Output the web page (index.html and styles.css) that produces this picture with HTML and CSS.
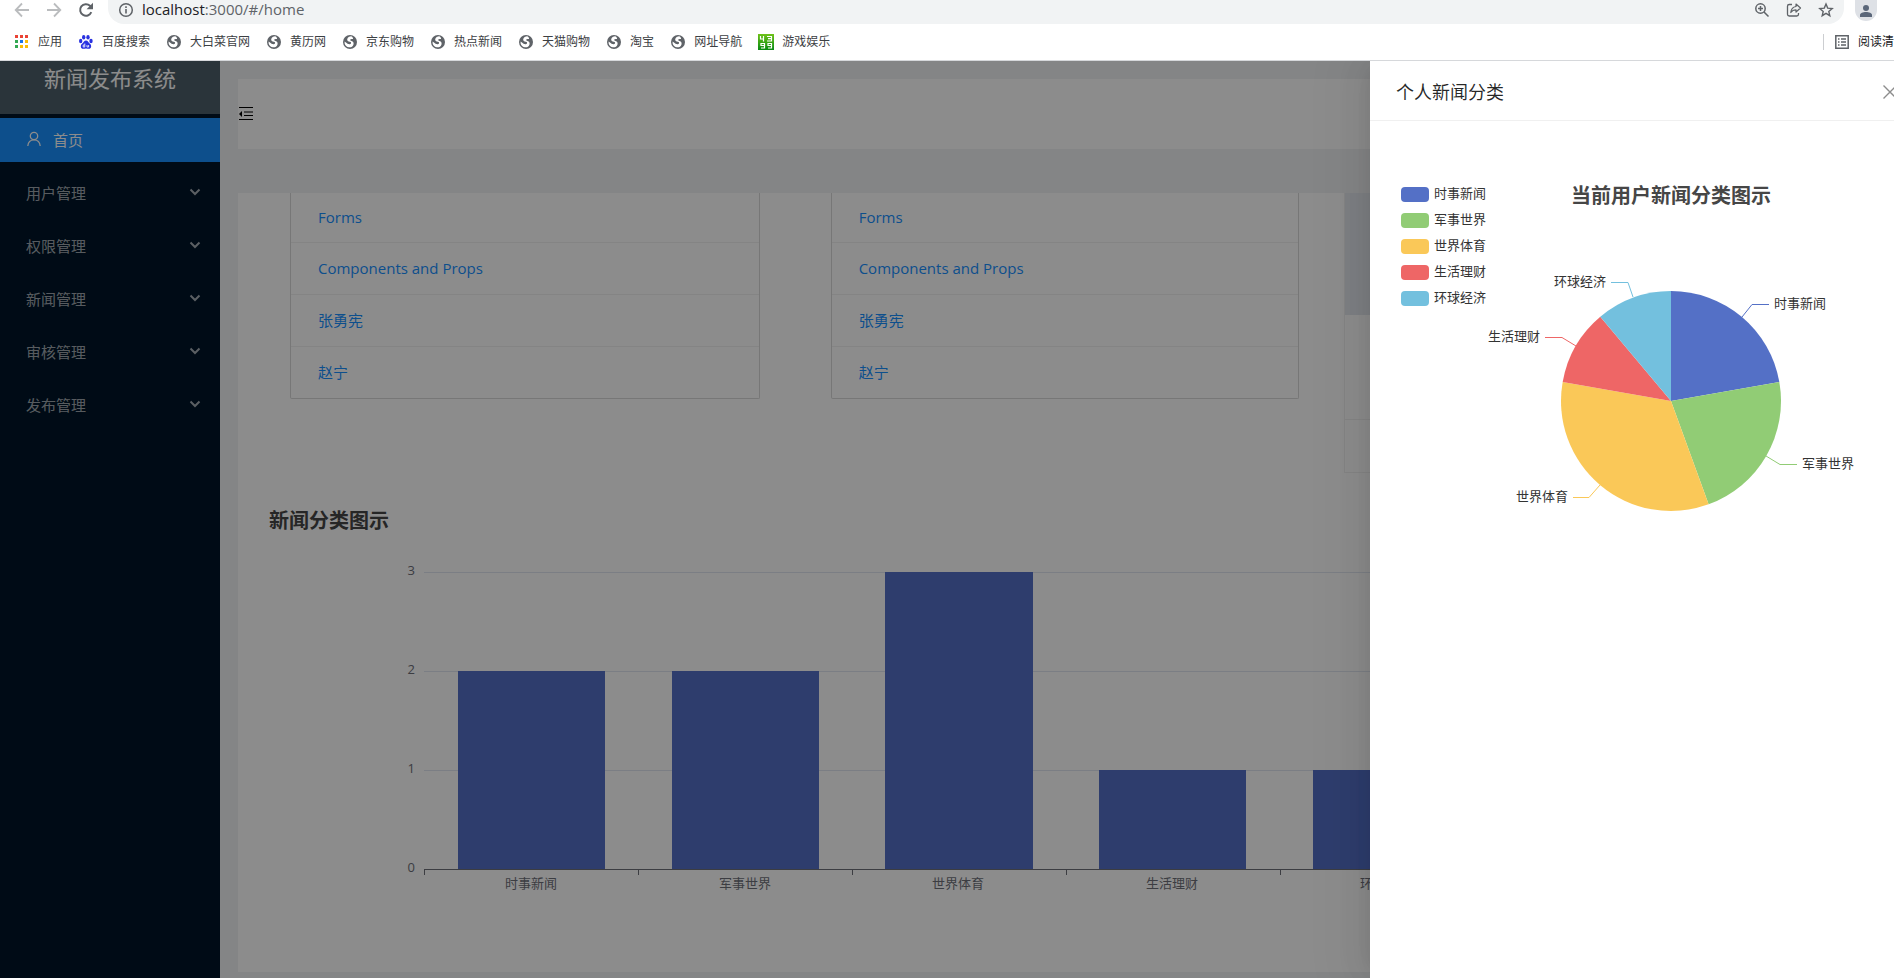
FILE: index.html
```html
<!DOCTYPE html>
<html lang="zh-CN">
<head>
<meta charset="utf-8">
<title>新闻发布系统</title>
<link rel="stylesheet" href="styles.css">
</head>
<body>
<svg class="sprite" aria-hidden="true">
  <symbol id="globe" viewBox="0 0 16 16">
    <circle cx="8" cy="8" r="7" fill="#5f6368"/>
    <path d="M9.200 2.300C7.500 2.500 5.500 3.300 5.200 5.300c-.2 1.500 1 2.200 2.600 2.400 1.300.2 1.400.7 1.200 1.500-.3 1.100-1.500 1.200-3 .9L2.600 7.500c-.4 2.300.8 4.400 2.900 5.400l.4.200c2.600.6 5-.3 5.600-2.700.4-1.600-.2-3-2-3.500-1.200-.3-1.500-.7-1.200-1.400.3-.6 1.200-.8 2.700-.4.300-1-.5-2.400-1.800-2.800z" fill="#fff"/>
  </symbol>
  <symbol id="chevron" viewBox="0 0 12 8">
    <path d="M1.500 1.500 6 6l4.500-4.500" fill="none" stroke="currentColor" stroke-width="2"/>
  </symbol>
</svg>

<header class="toolbar">
  <div class="nav-buttons">
    <button class="icon-button faded" aria-label="后退"><svg width="16" height="16" viewBox="0 0 16 16"><path d="M15 8H2M8 1.500 1.700 8 8 14.500" fill="none" stroke="currentColor" stroke-width="1.800"/></svg></button>
    <button class="icon-button faded" aria-label="前进"><svg width="16" height="16" viewBox="0 0 16 16"><path d="M1 8h13M8 1.500 14.300 8 8 14.500" fill="none" stroke="currentColor" stroke-width="1.800"/></svg></button>
    <button class="icon-button" aria-label="重新加载"><svg width="16" height="16" viewBox="0 0 16 16"><path d="M13.300 10.200A5.800 5.800 0 1 1 12 3.800L13.500 5.300" fill="none" stroke="currentColor" stroke-width="2"/><path d="M15 .8v6.400H8.600z" fill="currentColor"/></svg></button>
  </div>
  <div class="address">
    <svg width="16" height="16" viewBox="0 0 16 16"><circle cx="8" cy="8" r="6.300" fill="none" stroke="#5f6368" stroke-width="1.500"/><path d="M8 7v4.500M8 4.300v1.600" stroke="#5f6368" stroke-width="1.600"/></svg>
    <span class="url">localhost<span class="url-path">:3000/#/home</span></span>
    <span class="address-actions">
      <button class="icon-button" aria-label="缩放"><svg width="16" height="16" viewBox="0 0 16 16"><circle cx="6.500" cy="6.500" r="4.700" fill="none" stroke="currentColor" stroke-width="1.500"/><path d="M10 10l4.500 4.500M6.500 4v5M4 6.500h5" fill="none" stroke="currentColor" stroke-width="1.500"/></svg></button>
      <button class="icon-button" aria-label="分享"><svg width="16" height="16" viewBox="0 0 16 16"><path d="M6 2.500H3.200A1.700 1.700 0 0 0 1.500 4.200v8.100A1.700 1.700 0 0 0 3.200 14h7.600a1.700 1.700 0 0 0 1.700-1.700V11" fill="none" stroke="currentColor" stroke-width="1.300"/><path d="M10 2l4.500 4-4.500 4V7.800c-2.500 0-4 .8-5.200 2.700.3-3 1.900-5.500 5.200-6z" fill="none" stroke="currentColor" stroke-width="1.200" stroke-linejoin="round"/></svg></button>
      <button class="icon-button" aria-label="收藏"><svg width="16" height="16" viewBox="0 0 16 16"><path d="M8 2l1.700 4.100 4.500.4-3.400 2.900 1 4.300L8 11.400l-3.800 2.300 1-4.300L1.800 6.500l4.500-.4z" fill="none" stroke="currentColor" stroke-width="1.400"/></svg></button>
    </span>
  </div>
  <button class="avatar" aria-label="用户"><svg width="14" height="14" viewBox="0 0 14 14"><circle cx="7" cy="4" r="3" fill="#5a6679"/><path d="M1 13v-2c0-2 3-3 6-3s6 1 6 3v2z" fill="#5a6679"/></svg></button>
</header>

<nav class="bookmarks">
  <a href="#apps"><svg width="16" height="16" viewBox="0 0 16 16"><path d="M1 1h3v3H1zM6 1h3v3H6zM11 1h3v3h-3z" fill="#ea4335"/><path d="M1 6h3v3H1zM1 11h3v3H1z" fill="#34a853"/><path d="M6 6h3v3H6z" fill="#1a73e8"/><path d="M6 11h3v3H6zM11 6h3v3h-3zM11 11h3v3h-3z" fill="#fbbc05"/></svg>应用</a>
  <a href="#baidu"><svg width="16" height="16" viewBox="0 0 16 16"><g fill="#2932e1"><ellipse cx="2.700" cy="7" rx="1.700" ry="2.200"/><ellipse cx="5.700" cy="3.200" rx="1.700" ry="2.300"/><ellipse cx="10" cy="3.200" rx="1.700" ry="2.300"/><ellipse cx="13" cy="7" rx="1.700" ry="2.200"/><path d="M8 6.500c2 0 2.500 2.200 4.200 3.500 1.600 1.400 1.300 4.800-1.400 4.800-1 0-1.700-.3-2.800-.3s-1.800.3-2.800.3c-2.700 0-3-3.400-1.400-4.800C5.500 8.700 6 6.500 8 6.500z"/></g><path d="M6.800 9.500v3.500H5.200v-2h1.600M9 11v2h1.600v-2" fill="none" stroke="#fff" stroke-width=".8"/></svg>百度搜索</a>
  <a href="#b1"><svg width="16" height="16"><use href="#globe"/></svg>大白菜官网</a>
  <a href="#b2"><svg width="16" height="16"><use href="#globe"/></svg>黄历网</a>
  <a href="#b3"><svg width="16" height="16"><use href="#globe"/></svg>京东购物</a>
  <a href="#b4"><svg width="16" height="16"><use href="#globe"/></svg>热点新闻</a>
  <a href="#b5"><svg width="16" height="16"><use href="#globe"/></svg>天猫购物</a>
  <a href="#b6"><svg width="16" height="16"><use href="#globe"/></svg>淘宝</a>
  <a href="#b7"><svg width="16" height="16"><use href="#globe"/></svg>网址导航</a>
  <a href="#b8"><svg width="16" height="16" viewBox="0 0 16 16"><defs><linearGradient id="green" x1="0" y1="0" x2="0" y2="1"><stop offset="0" stop-color="#6fc219"/><stop offset="1" stop-color="#078a12"/></linearGradient></defs><path d="M0 0h16v16H0z" fill="url(#green)"/><path d="M2.500 2v3h3.500M5.500 2v5.500M9 2.500h4.500v4.500H9M10 4.700h3.500M6.500 11.500H3V9.500h3.500v4.500H3M13.500 11.500H10V9.500h3.500v4.500H10" fill="none" stroke="#fff" stroke-width="1.200"/></svg>游戏娱乐</a>
  <a class="reading-list" href="#reading"><svg width="16" height="16" viewBox="0 0 16 16"><path d="M1.800 1.800h12.400v12.400H1.800z" fill="none" stroke="#5f6368" stroke-width="1.500"/><path d="M4 5h1.500M4 8h1.500M4 11h1.500M7 5h5M7 8h5M7 11h5" stroke="#5f6368" stroke-width="1.500"/></svg>阅读清单</a>
</nav>

<div class="app">
  <aside class="sidebar">
    <h1 class="logo">新闻发布系统</h1>
    <nav class="menu">
      <a class="menu-item active" href="#/home"><svg width="16" height="16" viewBox="0 0 16 16"><circle cx="8" cy="5" r="3.700" fill="none" stroke="currentColor" stroke-width="1.300"/><path d="M1.800 15c.2-3.700 2.700-6.200 6.200-6.200s6 2.500 6.200 6.200" fill="none" stroke="currentColor" stroke-width="1.300"/></svg>首页</a>
      <button class="menu-item">用户管理<svg class="arrow" width="12" height="8"><use href="#chevron"/></svg></button>
      <button class="menu-item">权限管理<svg class="arrow" width="12" height="8"><use href="#chevron"/></svg></button>
      <button class="menu-item">新闻管理<svg class="arrow" width="12" height="8"><use href="#chevron"/></svg></button>
      <button class="menu-item">审核管理<svg class="arrow" width="12" height="8"><use href="#chevron"/></svg></button>
      <button class="menu-item">发布管理<svg class="arrow" width="12" height="8"><use href="#chevron"/></svg></button>
    </nav>
  </aside>

  <div class="layout">
    <header class="page-header">
      <button class="icon-button fold" aria-label="折叠菜单"><svg width="16" height="16" viewBox="0 0 16 16"><path d="M1 1.500h14M6 6h9M6 9.500h9M1 13.500h14" stroke="currentColor"/><path d="M4 5v6L1 8z" fill="currentColor"/></svg></button>
    </header>
    <main class="content">
      <section class="cards">
        <ul class="list-card first">
          <li><a href="#n1">Forms</a></li>
          <li><a href="#n2">Components and Props</a></li>
          <li><a href="#n3">张勇宪</a></li>
          <li><a href="#n4">赵宁</a></li>
        </ul>
        <ul class="list-card">
          <li><a href="#n1">Forms</a></li>
          <li><a href="#n2">Components and Props</a></li>
          <li><a href="#n3">张勇宪</a></li>
          <li><a href="#n4">赵宁</a></li>
        </ul>
        <article class="profile-card">
          <div class="cover"></div>
          <div class="profile-body"></div>
          <div class="profile-actions"></div>
        </article>
      </section>
      <section class="bar-section">
        <h2 class="chart-title">新闻分类图示</h2>
        <svg class="bar-chart" width="1300" height="370">
          <path class="grid-line" d="M186 37.500H1256M186 136.500H1256M186 235.500H1256"/>
          <g class="bar">
            <rect x="220" y="136" width="147" height="198"/>
            <rect x="434" y="136" width="147" height="198"/>
            <rect x="647" y="37" width="148" height="297"/>
            <rect x="861" y="235" width="147" height="99"/>
            <rect x="1075" y="235" width="147" height="99"/>
          </g>
          <path class="axis" d="M186 334.500H1256M186.500 334v6M400.500 334v6M614.500 334v6M828.500 334v6M1042.500 334v6M1256.500 334v6"/>
          <g class="axis-label" text-anchor="end">
            <text x="177" y="40">3</text>
            <text x="177" y="139">2</text>
            <text x="177" y="238">1</text>
            <text x="177" y="337">0</text>
          </g>
          <g class="axis-label" text-anchor="middle">
            <text x="293" y="353">时事新闻</text>
            <text x="507" y="353">军事世界</text>
            <text x="720" y="353">世界体育</text>
            <text x="934" y="353">生活理财</text>
            <text x="1148" y="353">环球经济</text>
          </g>
        </svg>
      </section>
    </main>
  </div>

  <div class="mask"></div>

  <section class="drawer" role="dialog" aria-labelledby="drawer-title">
    <header class="drawer-header">
      <h2 id="drawer-title">个人新闻分类</h2>
      <button class="close" aria-label="关闭"><svg width="16" height="16" viewBox="0 0 16 16"><path d="M1.500 1.500l13 13M14.500 1.500l-13 13" stroke="currentColor" stroke-width="1.400"/></svg></button>
    </header>
    <div class="drawer-body">
      <ul class="legend">
        <li><i class="swatch blue"></i><span>时事新闻</span></li>
        <li><i class="swatch green"></i><span>军事世界</span></li>
        <li><i class="swatch yellow"></i><span>世界体育</span></li>
        <li><i class="swatch red"></i><span>生活理财</span></li>
        <li><i class="swatch cyan"></i><span>环球经济</span></li>
      </ul>
      <figure class="pie">
        <figcaption>当前用户新闻分类图示</figcaption>
        <svg width="400" height="300" viewBox="-200 -150 400 300">
          <path fill="#5470c6" d="M0 0V-110A110 110 0 0 1 108.330-19.100z"/>
          <path fill="#91cc75" d="M0 0 108.330-19.100A110 110 0 0 1 37.620 103.370z"/>
          <path fill="#fac858" d="M0 0 37.620 103.370A110 110 0 0 1-108.330-19.100z"/>
          <path fill="#ee6666" d="M0 0-108.330-19.100A110 110 0 0 1-70.710-84.270z"/>
          <path fill="#73c0de" d="M0 0-70.710-84.270A110 110 0 0 1 0-110z"/>
          <g fill="none">
            <path stroke="#5470c6" d="M71-84 81-96.500H98"/>
            <path stroke="#91cc75" d="M95 55l14 8.500h17"/>
            <path stroke="#fac858" d="M-71 84-82 96.500H-98"/>
            <path stroke="#ee6666" d="M-95-55-109-63.500H-126"/>
            <path stroke="#73c0de" d="M-38-104-43-118.500H-60"/>
          </g>
          <g class="pie-label">
            <text x="103" y="-93">时事新闻</text>
            <text x="131" y="67">军事世界</text>
            <g text-anchor="end">
              <text x="-103" y="100">世界体育</text>
              <text x="-131" y="-60">生活理财</text>
              <text x="-65" y="-115">环球经济</text>
            </g>
          </g>
        </svg>
      </figure>
    </div>
  </section>
</div>
</body>
</html>
```
FILE: styles.css
```css
* { box-sizing: border-box; }

body {
  margin: 0;
  height: 100vh;
  display: flex;
  flex-direction: column;
  overflow: hidden;
  background: #fff;
  font-family: "Open Sans", "Noto Sans CJK SC", sans-serif;
  font-size: 15px;
}

h1, h2, ul, figure { margin: 0; padding: 0; }
ul { list-style: none; }
a { text-decoration: none; }
button { border: 0; padding: 0; background: none; font: inherit; cursor: pointer; }
svg { display: block; flex: none; }
.sprite { position: absolute; width: 0; height: 0; }

.icon-button { color: #5f6368; }
.icon-button.faded { color: #babcbe; }

/* Browser chrome */
.toolbar { display: flex; height: 24px; flex: none; }
.nav-buttons { display: flex; gap: 16px; height: 20px; padding: 2px 14px; align-items: center; }
.address {
  flex: 1;
  display: flex;
  align-items: center;
  gap: 8px;
  padding: 0 10px 4px;
  background: #f1f3f4;
  border-radius: 0 0 16px 16px;
}
.url { padding-bottom: 2px; color: #202124; line-height: 18px; }
.url-path { color: #5f6368; }
.address-actions { display: flex; gap: 16px; margin-left: auto; }
.avatar {
  display: flex;
  align-items: center;
  justify-content: center;
  width: 22px;
  height: 21px;
  margin: 0 17px 0 11px;
  border-radius: 0 0 11px 11px;
  background: #dee1e6;
}

.bookmarks {
  display: flex;
  align-items: center;
  flex: none;
  gap: 16px;
  height: 37px;
  padding-left: 14px;
  border-bottom: 1px solid #d6d8db;
  overflow: hidden;
  font-size: 12px;
}
.bookmarks a {
  display: flex;
  flex: none;
  align-items: center;
  gap: 8px;
  height: 16px;
  line-height: 18px;
  color: #3c4043;
}
.bookmarks .reading-list {
  margin: 0 -12px 0 auto;
  padding-left: 10px;
  border-left: 1px solid #ccced1;
  color: #202124;
}

/* Application */
.app { position: relative; display: flex; flex: 1; min-height: 0; overflow: hidden; }

.sidebar { width: 220px; flex: none; background: #001529; }
.logo {
  height: 53px;
  background: #4e5f6b;
  color: #fff;
  font-size: 22px;
  font-weight: 400;
  line-height: 35px;
  text-align: center;
}
.menu { display: flex; flex-direction: column; gap: 9px; padding-top: 4px; }
.menu-item {
  display: flex;
  align-items: center;
  gap: 11px;
  width: 100%;
  height: 44px;
  padding: 0 19px 2px 26px;
  color: rgba(255, 255, 255, .65);
}
.menu-item.active { background: #1890ff; color: #fff; }
.arrow { margin-left: auto; }

.layout {
  flex: 1;
  min-width: 0;
  display: flex;
  flex-direction: column;
  gap: 44px;
  padding: 18px 18px 6px;
  background: #f0f2f5;
}
.page-header { display: flex; align-items: center; height: 70px; flex: none; background: #fff; }
.fold { color: #000; }
.content { flex: 1; min-height: 0; background: #fff; overflow: hidden; }

.cards {
  display: grid;
  grid-template-columns: 496fr 469fr 532fr;
  align-items: start;
  column-gap: 45px;
  padding-left: 52px;
  height: 280px;
}
.list-card {
  border: 1px solid #d9d9d9;
  border-top: 0;
  border-radius: 0 0 2px 2px;
}
.list-card.first { margin-right: 26px; }
.list-card li {
  display: flex;
  align-items: center;
  height: 52px;
  padding: 0 27px 2px;
  border-bottom: 1px solid #f0f0f0;
}
.list-card li:first-child { height: 50px; }
.list-card li:last-child { height: 51px; border-bottom: 0; }
.list-card a { color: #1890ff; }

.profile-card { border: 1px solid #f0f0f0; border-top: 0; }
.cover { height: 122px; background: #e3e7ee; }
.profile-body { height: 104px; }
.profile-actions { height: 53px; border-top: 1px solid #f0f0f0; }

.chart-title {
  padding: 33px 0 0 31px;
  color: #464646;
  font-size: 20px;
  line-height: 29px;
}
.bar-chart { overflow: visible; }
.grid-line { stroke: #e0e6f1; }
.bar { fill: #5470c6; }
.axis { stroke: #6e7079; }
.axis-label { fill: #6e7079; font-size: 13px; }

.mask { position: absolute; inset: 0; background: rgba(0, 0, 0, .45); }

/* Drawer */
.drawer {
  position: absolute;
  top: 0;
  right: 0;
  bottom: 0;
  width: 524px;
  background: #fff;
  box-shadow: -6px 0 16px -8px rgba(0, 0, 0, .08), -9px 0 28px rgba(0, 0, 0, .05), -12px 0 48px 16px rgba(0, 0, 0, .03);
}
.drawer-header {
  display: flex;
  align-items: center;
  justify-content: space-between;
  height: 60px;
  padding-left: 26px;
  border-bottom: 1px solid #f0f0f0;
  overflow: hidden;
}
.drawer-header h2 { color: rgba(0, 0, 0, .85); font-size: 18px; font-weight: 400; }
.close { margin: 2px -4px 0 0; color: rgba(0, 0, 0, .45); }

.drawer-body { display: flex; padding: 61px 0 0 31px; }
.legend { display: flex; flex-direction: column; gap: 6px; padding-top: 2px; color: #333; font-size: 13px; }
.legend li { display: flex; align-items: center; gap: 5px; height: 20px; white-space: nowrap; }
.legend span { padding-bottom: 2px; line-height: 18px; }
.swatch { width: 28px; height: 15px; border-radius: 4px; }
.blue { background: #5470c6; }
.green { background: #91cc75; }
.yellow { background: #fac858; }
.red { background: #ee6666; }
.cyan { background: #73c0de; }

.pie { width: 400px; margin-left: -15px; }
.pie figcaption {
  color: #464646;
  font-size: 20px;
  font-weight: 700;
  line-height: 28px;
  text-align: center;
}
.pie svg { margin-top: 41px; }
.pie-label { fill: #333; font-size: 13px; }
```
